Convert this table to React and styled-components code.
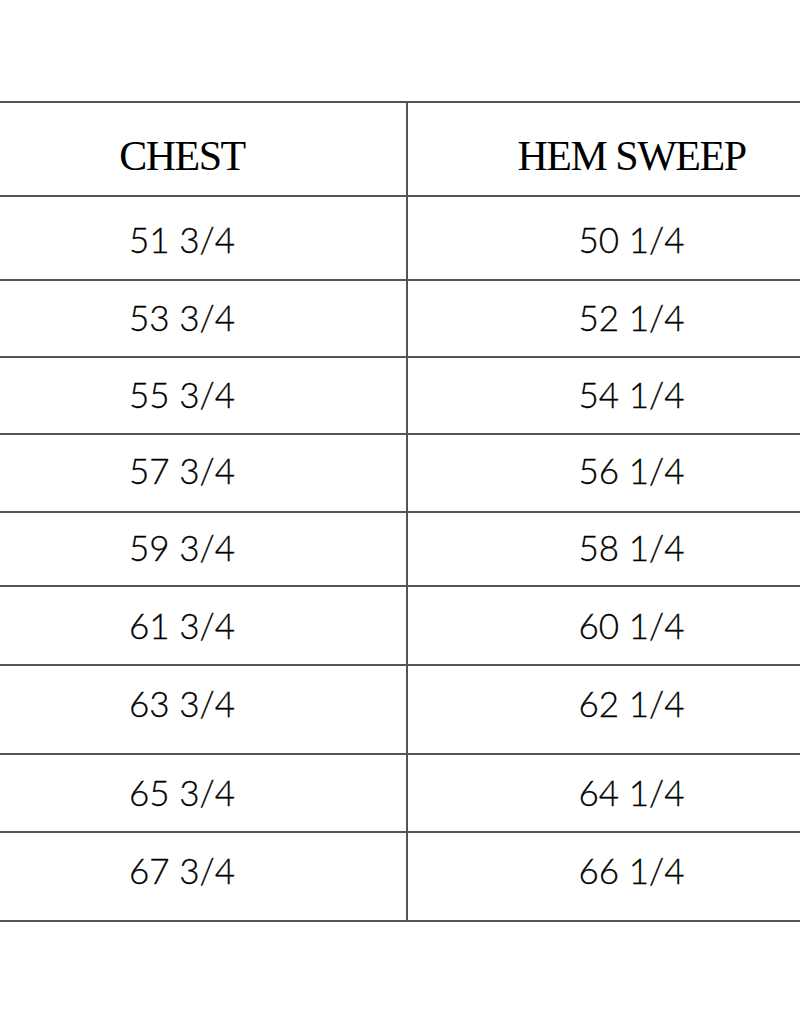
import React from 'react';
import styled, { createGlobalStyle } from 'styled-components';

const GlobalStyle = createGlobalStyle`
  html, body {
    margin: 0;
    padding: 0;
    background: #fff;
    overflow: hidden;
  }
`;

const Page = styled.div`
  width: 800px;
  height: 1024px;
  padding-top: 101px;
  box-sizing: border-box;
  overflow: hidden;
`;

const Table = styled.div`
  width: 898px;
  margin-left: -43px;
  border-bottom: 2px solid #555;
`;

const Row = styled.div`
  display: grid;
  grid-template-columns: 450px 448px;
  height: ${p => p.$h}px;
  box-sizing: border-box;
  border-top: 2px solid #555;
`;

const Cell = styled.div`
  text-align: center;
  padding-top: ${p => p.$pad}px;
  box-sizing: border-box;
  color: #000;
  & + & {
    border-left: 2px solid #555;
    margin-left: -1px;
  }
`;

const HeadCell = styled(Cell)`
  font-family: 'Liberation Serif', 'Times New Roman', serif;
  font-size: 42px;
  line-height: 42px;
  letter-spacing: -1.5px;
`;

const ValueCell = styled(Cell)`
  font-family: Lato, 'Open Sans', sans-serif;
  font-weight: 300;
  font-size: 35px;
  line-height: 36px;
  -webkit-text-stroke: 0.3px #000;
`;

const rows = [
  { chest: '51 3/4', hem: '50 1/4', h: 84, pad: 24 },
  { chest: '53 3/4', hem: '52 1/4', h: 77, pad: 18 },
  { chest: '55 3/4', hem: '54 1/4', h: 77, pad: 18 },
  { chest: '57 3/4', hem: '56 1/4', h: 78, pad: 17 },
  { chest: '59 3/4', hem: '58 1/4', h: 74, pad: 16 },
  { chest: '61 3/4', hem: '60 1/4', h: 79, pad: 20 },
  { chest: '63 3/4', hem: '62 1/4', h: 89, pad: 19 },
  { chest: '65 3/4', hem: '64 1/4', h: 78, pad: 19 },
  { chest: '67 3/4', hem: '66 1/4', h: 89, pad: 19 },
];

export default function App() {
  return (
    <Page>
      <GlobalStyle />
      <Table>
        <Row $h={94}>
          <HeadCell $pad={32}>CHEST</HeadCell>
          <HeadCell $pad={32}>HEM SWEEP</HeadCell>
        </Row>
        {rows.map(r => (
          <Row key={r.chest} $h={r.h}>
            <ValueCell $pad={r.pad}>{r.chest}</ValueCell>
            <ValueCell $pad={r.pad}>{r.hem}</ValueCell>
          </Row>
        ))}
      </Table>
    </Page>
  );
}
